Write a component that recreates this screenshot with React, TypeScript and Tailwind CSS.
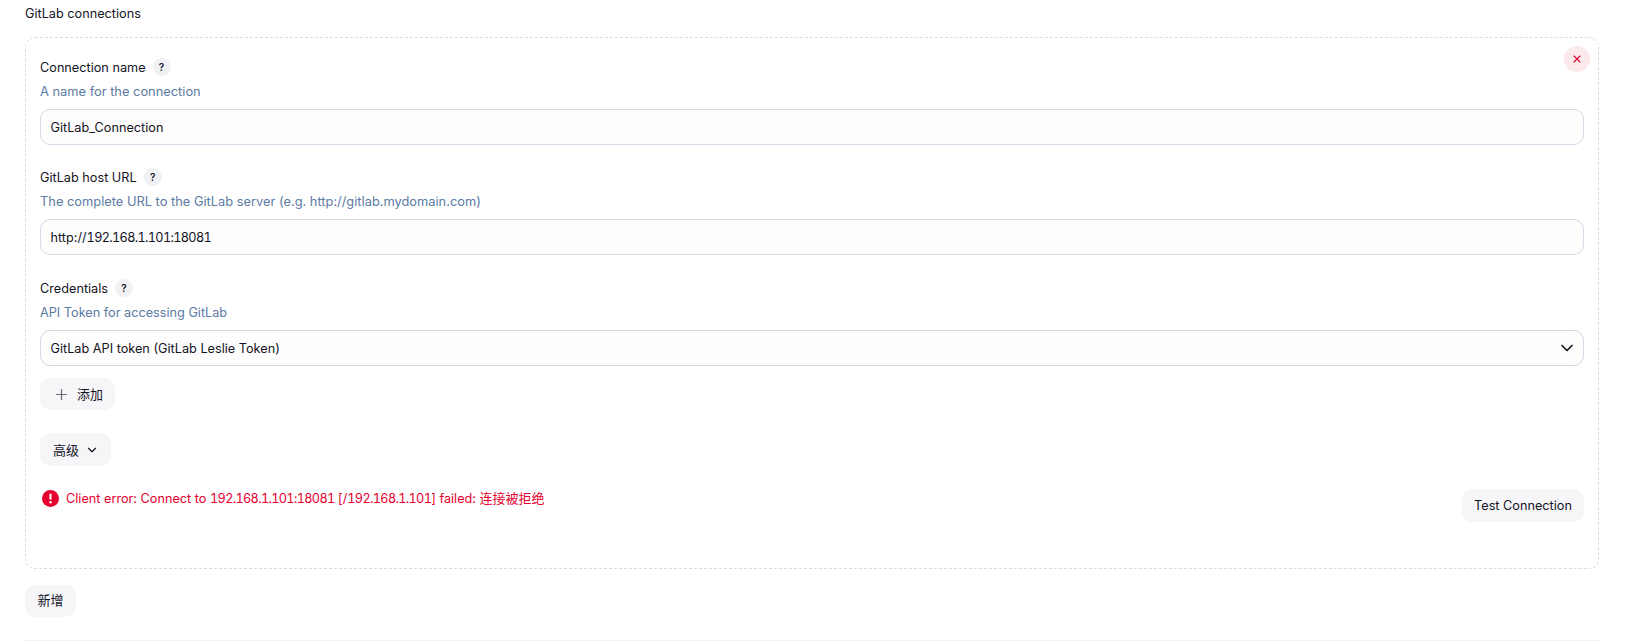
import React from "react";
import { ChevronDown, Plus, X } from "lucide-react";

const font = "font-['Inter','Noto_Sans_CJK_SC',sans-serif]";

const HelpBadge: React.FC = () => (
  <span className="ml-[7px] flex h-[18px] w-[18px] items-center justify-center rounded-full bg-[#eff1f5] text-[10px] font-semibold text-[#14141f]">
    ?
  </span>
);

// digits are wider than the letters in this font, squeeze tabular figures a bit
const Num: React.FC<{ children: React.ReactNode }> = ({ children }) => (
  <span className="tabular-nums tracking-[-0.66px]">{children}</span>
);

const FieldHead: React.FC<{ label: string; description: string; wide?: boolean }> = ({ label, description, wide }) => (
  <>
    <div className="flex h-[18px] items-center text-[#14141f]">
      <span className="h-[18px] leading-[20px]">{label}</span>
      <HelpBadge />
    </div>
    <div className={wide ? "mt-[6px] h-[18px] text-[12.85px] leading-[20px] text-[#5b7ba3]" : "mt-[6px] h-[18px] leading-[20px] text-[#5b7ba3]"}>
      {description}
    </div>
  </>
);

const App: React.FC = () => {
  return (
    <div className={`${font} h-[642px] overflow-hidden bg-white pl-[25px] pr-[27px] pt-[4px] text-[12.7px] leading-[18px] text-[#14141f]`}>
      <div className="h-[18px] leading-[20px]">GitLab connections</div>

      <div className="relative mt-[15px] h-[532px] rounded-[10px] border border-dashed border-[#d5dde6] px-[14px] pt-[20px]">
        <button className="absolute right-[8px] top-[8px] flex h-[26px] w-[26px] items-center justify-center rounded-full bg-[#fbe9ec] text-[#e6002e]">
          <X size={12} strokeWidth={2.25} />
        </button>

        <div className="flex flex-col gap-[23px]">
          <div>
            <FieldHead label="Connection name" description="A name for the connection" wide />
            <div className="mt-[9px] flex h-[36px] items-center rounded-[10px] border border-[#d3d9e6] bg-[#fdfdfd] px-[9.5px] pt-[2px]">
              GitLab_Connection
            </div>
          </div>

          <div>
            <FieldHead
              label="GitLab host URL"
              description="The complete URL to the GitLab server (e.g. http://gitlab.mydomain.com)"
              wide
            />
            <div className="mt-[9px] flex h-[36px] items-center rounded-[10px] border border-[#d3d9e6] bg-[#fdfdfd] px-[9.5px] pt-[2px]">
              <span>
                http://<Num>192.168.1.101:18081</Num>
              </span>
            </div>
          </div>

          <div className="mt-[1px]">
            <FieldHead label="Credentials" description="API Token for accessing GitLab" />
            <div className="mt-[9px] flex h-[36px] items-center justify-between rounded-[10px] border border-[#d3d9e6] bg-[#fdfdfd] pl-[9.5px] pr-[6px]">
              <span className="pt-[2px]">GitLab API token (GitLab Leslie Token)</span>
              <ChevronDown size={20} strokeWidth={2} />
            </div>
            <button className="mt-[12px] flex h-[32px] w-[75px] items-center rounded-[10px] bg-[#f6f6f9] pl-[13px] text-[13px]">
              <Plus size={17} strokeWidth={1.75} className="text-[#6b6b75]" />
              <span className="ml-[7px]">添加</span>
            </button>
          </div>
        </div>

        <button className="mt-[23px] flex h-[33px] w-[71px] items-center rounded-[10px] bg-[#f6f6f9] pl-[13px] text-[13px]">
          高级
          <ChevronDown size={14} strokeWidth={2} className="ml-[6px]" />
        </button>

        <div className="mt-[23px] flex items-start justify-between">
          <div className="flex items-center text-[#e6002e]">
            <svg viewBox="0 0 16 16" className="ml-[2px] mr-[7px] h-[17px] w-[17px] shrink-0">
              <circle cx="8" cy="8" r="8" fill="#e6002e" />
              <rect x="7" y="3.2" width="2" height="6" rx="1" fill="#fff" />
              <circle cx="8" cy="11.6" r="1.15" fill="#fff" />
            </svg>
            <span>
              Client error: Connect to <Num>192.168.1.101:18081</Num> [/<Num>192.168.1.101</Num>] failed:{" "}
              <span className="text-[13px]">连接被拒绝</span>
            </span>
          </div>
          <button className="flex h-[33px] w-[122px] items-center justify-center rounded-[10px] bg-[#f6f6f9] pt-[1px]">
            Test Connection
          </button>
        </div>
      </div>

      <button className="mt-[16px] flex h-[32px] w-[51px] items-center justify-center rounded-[10px] bg-[#f6f6f9] pb-[2px] text-[13px]">
        新增
      </button>

      <div className="mt-[23px] h-px bg-[#f2f2f5]" />
    </div>
  );
};

export default App;
